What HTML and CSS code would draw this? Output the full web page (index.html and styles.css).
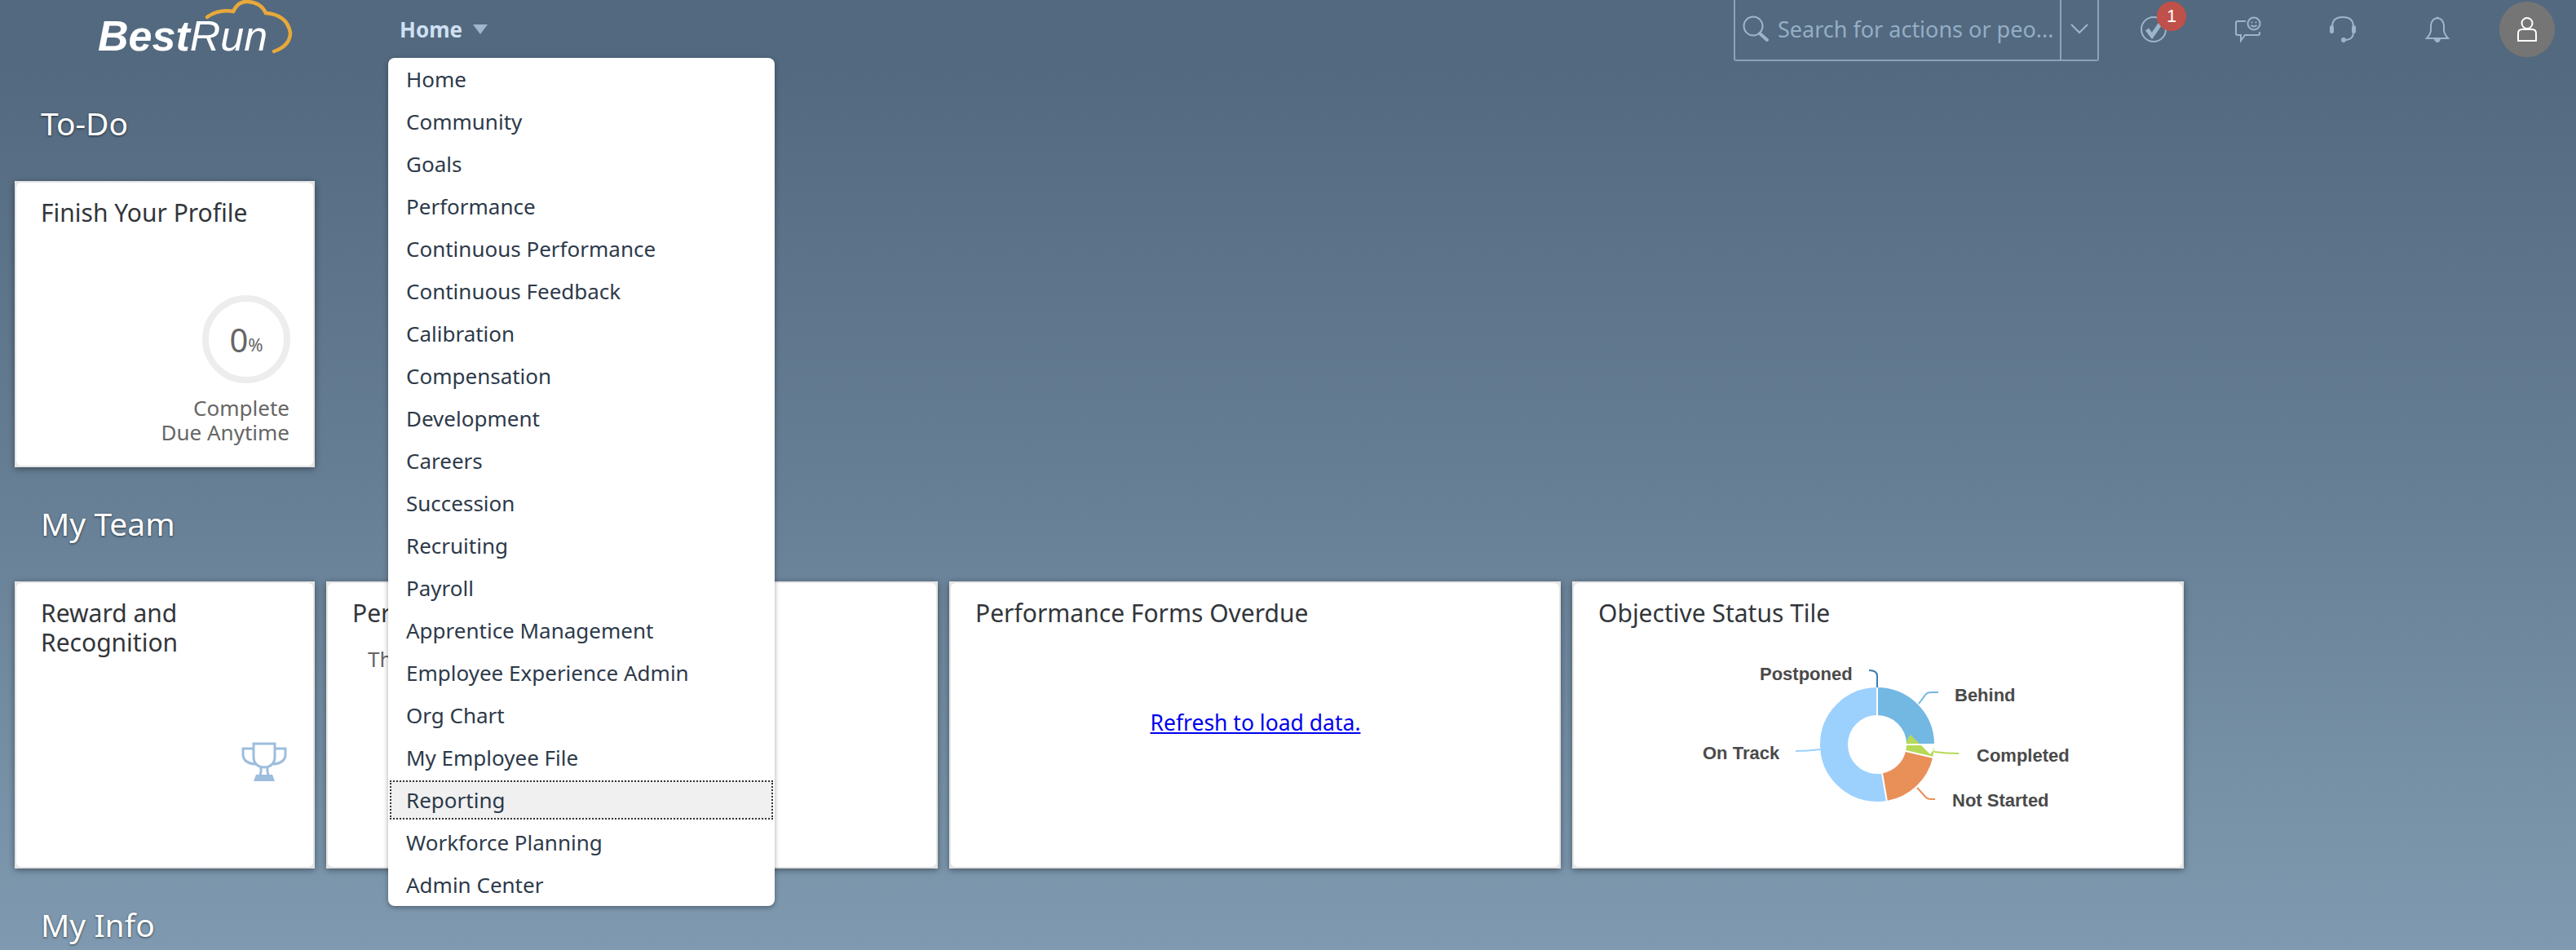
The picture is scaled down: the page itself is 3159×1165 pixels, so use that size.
FILE: index.html
```html
<!DOCTYPE html>
<html lang="en">
<head>
  <meta charset="UTF-8">
  <title>Home</title>
  <link rel="stylesheet" href="styles.css">
</head>
<body>
  <header class="header">
    <div class="logo">
      <svg class="logo-cloud" viewBox="0 0 150 70" width="150" height="70">
        <path d="M26 21 Q40 11 58 14 Q64 1 76 2 Q92 3 98 16 Q124 18 128 40 Q128 56 108 63" />
      </svg>
      <span class="logo-text"><b>Best</b>Run</span>
    </div>
    <nav class="nav">
      <span class="nav-home">Home</span>
      <span class="nav-arrow"></span>
      <ul class="menu">
        <li class="menu-item">Home</li>
        <li class="menu-item">Community</li>
        <li class="menu-item">Goals</li>
        <li class="menu-item">Performance</li>
        <li class="menu-item">Continuous Performance</li>
        <li class="menu-item">Continuous Feedback</li>
        <li class="menu-item">Calibration</li>
        <li class="menu-item">Compensation</li>
        <li class="menu-item">Development</li>
        <li class="menu-item">Careers</li>
        <li class="menu-item">Succession</li>
        <li class="menu-item">Recruiting</li>
        <li class="menu-item">Payroll</li>
        <li class="menu-item">Apprentice Management</li>
        <li class="menu-item">Employee Experience Admin</li>
        <li class="menu-item">Org Chart</li>
        <li class="menu-item">My Employee File</li>
        <li class="menu-item menu-item-focus">Reporting</li>
        <li class="menu-item">Workforce Planning</li>
        <li class="menu-item">Admin Center</li>
      </ul>
    </nav>
    <div class="search">
      <div class="search-field">
        <svg class="icon" viewBox="0 0 32 32" width="32" height="32">
          <circle cx="13" cy="13" r="11.5" />
          <path class="thick" d="M21 22 L30 30" />
        </svg>
        <span class="search-text">Search for actions or peo...</span>
      </div>
      <div class="search-toggle">
        <svg class="icon" viewBox="0 0 22 12" width="22" height="12"><path d="M1 1 L11 11 L21 1" /></svg>
      </div>
    </div>
    <div class="header-btn">
      <svg class="icon" viewBox="0 0 32 32" width="32" height="32">
        <circle cx="16" cy="16" r="15" />
        <path class="check" d="M8 16 L14 24 L25 8" />
      </svg>
      <span class="badge">1</span>
    </div>
    <div class="header-btn">
      <svg class="icon" viewBox="0 0 32 30" width="32" height="30">
        <path d="M13 5 H3 Q1 5 1 7 V20 Q1 22 3 22 H7 V29 L12 22 H28 Q30 22 30 20 V18" />
        <circle cx="23" cy="8" r="7.5" />
        <circle class="dot" cx="20.5" cy="6.5" r="1" />
        <circle class="dot" cx="25.5" cy="6.5" r="1" />
        <path d="M19.5 10 Q23 13 26.5 10" />
      </svg>
    </div>
    <div class="header-btn">
      <svg class="icon" viewBox="0 0 32 32" width="32" height="32">
        <path d="M3 15 V13 Q3 1 16 1 Q29 1 29 13 V20 Q29 28 20 29" />
        <rect class="dot" x="0" y="11" width="5" height="10" rx="2.5" />
        <rect class="dot" x="27" y="11" width="5" height="10" rx="2.5" />
        <circle class="dot" cx="17" cy="29" r="3" />
      </svg>
    </div>
    <div class="header-btn">
      <svg class="icon" viewBox="0 0 28 32" width="28" height="32">
        <path d="M14 2 Q21 3 22 11 V18 Q23 23 27 27 H1 Q5 23 6 18 V11 Q7 3 14 2 Z" />
        <circle class="dot" cx="14" cy="2" r="1.5" />
        <path class="dot" d="M10 28 H18 Q17 32 14 32 Q11 32 10 28 Z" />
      </svg>
    </div>
    <div class="avatar">
      <svg class="avatar-icon" viewBox="0 0 24 30" width="24" height="30">
        <circle cx="12" cy="7.5" r="6.5" />
        <path d="M1 29 V20 Q1 15 6 15 H18 Q23 15 23 20 V29 Z" />
      </svg>
    </div>
  </header>

  <main class="main">
    <h2 class="section-title">To-Do</h2>
    <section class="tiles tiles-first">
      <div class="tile">
        <div class="tile-body">
          <h3 class="tile-title">Finish Your Profile</h3>
          <div class="profile">
            <div class="ring"><span class="ring-num">0</span><span class="ring-pct">%</span></div>
            <div class="profile-text">Complete<br>Due Anytime</div>
          </div>
        </div>
      </div>
    </section>

    <h2 class="section-title">My Team</h2>
    <section class="tiles">
      <div class="tile">
        <div class="tile-body">
          <h3 class="tile-title">Reward and Recognition</h3>
          <svg class="trophy" viewBox="0 0 56 50" width="56" height="50">
            <path d="M15 2 H41 V18 Q41 30 28 31 Q15 30 15 18 Z" />
            <path d="M15 8 H2 V16 Q3 26 17 27" />
            <path d="M41 8 H54 V16 Q53 26 39 27" />
            <path d="M24 31 Q25 39 20 46 M32 31 Q31 39 36 46" />
            <path class="trophy-base" d="M18 40 H38 L41 48 H15 Z" />
          </svg>
        </div>
      </div>
      <div class="tile tile-wide">
        <div class="tile-body">
          <h3 class="tile-title">Per</h3>
          <p class="tile-note">Th</p>
        </div>
      </div>
      <div class="tile tile-wide">
        <div class="tile-body">
          <h3 class="tile-title">Performance Forms Overdue</h3>
          <a class="refresh" href="#">Refresh to load data.</a>
        </div>
      </div>
      <div class="tile tile-wide">
        <div class="tile-body">
          <h3 class="tile-title">Objective Status Tile</h3>
          <svg class="chart" viewBox="-374 -113 748 240" width="748" height="240">
            <!-- slices, angles out of 360 starting at 12 o'clock -->
            <circle class="slice" r="53" pathLength="360" stroke="#9cd1fe" stroke-dasharray="0 170 190 0" transform="rotate(-90)" />
            <circle class="slice" r="53" pathLength="360" stroke="#73b8e2" stroke-dasharray="90 270" transform="rotate(-90)" />
            <circle class="slice" r="53" pathLength="360" stroke="#b6d957" stroke-dasharray="0 90 13 257" transform="rotate(-90)" />
            <circle class="slice" r="53" pathLength="360" stroke="#e98f58" stroke-dasharray="0 103 67 190" transform="rotate(-90)" />
            <g class="seps">
              <path d="M0 -36 V-71" />
              <path d="M36 0 H71" />
              <path d="M35 8 L69 16" />
              <path d="M6 35 L12 70" />
            </g>
            <path class="lead" stroke="#3b7db0" d="M0 -70 V-84 Q0 -91 -10 -91" />
            <path class="lead" stroke="#73b8e2" d="M51 -50 L60 -62 Q62 -64 66 -64 H75" />
            <path class="lead" stroke="#b6d957" d="M70 9 Q85 11 100 11" />
            <path class="lead" stroke="#e98f58" d="M49 53 L60 65 Q62 67 66 67 H71" />
            <path class="lead" stroke="#9cd1fe" d="M-70 6 Q-85 8 -100 8" />
            <text class="chart-label" x="-144" y="-79">Postponed</text>
            <text class="chart-label" x="95" y="-53">Behind</text>
            <text class="chart-label" x="122" y="21">Completed</text>
            <text class="chart-label" x="92" y="76">Not Started</text>
            <text class="chart-label" x="-214" y="18">On Track</text>
          </svg>
        </div>
      </div>
    </section>

    <h2 class="section-title">My Info</h2>
  </main>
</body>
</html>
```

FILE: styles.css
```css
html, body {
  height: 100%;
  margin: 0;
  padding: 0;
  overflow: hidden;
}
body {
  background: linear-gradient(to bottom, #53697f 0, #53697f 82px, #667e94 50%, #7f9ab0 100%);
  font-family: "Noto Sans", sans-serif;
  color: #32363a;
}

/* Header */
.header {
  height: 82px;
  box-sizing: border-box;
  padding: 0 26px 10px 120px;
  display: flex;
  align-items: center;
}
.logo {
  position: relative;
  width: 370px;
  height: 72px;
}
.logo-cloud {
  position: absolute;
  left: 108px;
  top: 0;
  fill: none;
  stroke: #e8a93a;
  stroke-width: 4.5;
  stroke-linecap: round;
}
.logo-text {
  position: absolute;
  left: 0;
  top: 16px;
  font-family: "Liberation Sans", sans-serif;
  font-size: 52px;
  line-height: 56px;
  font-style: italic;
  color: #fff;
}
.nav {
  position: relative;
  display: flex;
  align-items: center;
  gap: 13px;
}
.nav-home {
  font-size: 26px;
  font-weight: 700;
  color: #cfe0f2;
}
.nav-arrow {
  width: 0;
  height: 0;
  border-left: 9px solid transparent;
  border-right: 9px solid transparent;
  border-top: 12px solid #9fb6cc;
}
.menu {
  position: absolute;
  left: -14px;
  top: 53px;
  z-index: 5;
  width: 474px;
  margin: 0;
  padding: 0;
  list-style: none;
  background: #fff;
  border-radius: 8px;
  box-shadow: 0 2px 6px rgba(0, 0, 0, .35);
}
.menu-item {
  height: 52px;
  box-sizing: border-box;
  padding-left: 20px;
  border: 2px solid transparent;
  background-clip: padding-box;
  display: flex;
  align-items: center;
  font-size: 26px;
  color: #2d3a4a;
}
.menu-item-focus {
  background-color: #f0f0f0;
  outline: 2px dotted #333;
  outline-offset: -4px;
}

/* Search */
.search {
  align-self: flex-start;
  margin-left: auto;
  width: 448px;
  height: 75px;
  box-sizing: border-box;
  border: 2px solid #8ba3ba;
  border-top: 0;
  border-radius: 0 0 3px 3px;
  display: flex;
}
.search-field {
  width: 400px;
  box-sizing: border-box;
  padding: 0 0 3px 9px;
  border-right: 2px solid #8ba3ba;
  display: flex;
  align-items: center;
  gap: 11px;
}
.search-text {
  font-size: 27px;
  white-space: nowrap;
  color: #93aec6;
}
.search-toggle {
  flex: 1;
  display: flex;
  align-items: center;
  justify-content: center;
  padding-bottom: 4px;
}
.icon {
  display: block;
  flex: none;
  fill: none;
  stroke: #9db5cc;
  stroke-width: 2;
  overflow: visible;
}
.icon .thick { stroke-width: 4; stroke-linecap: round; }
.icon .check { stroke-width: 5; }
.icon .dot { fill: #9db5cc; stroke: none; }

.header-btn {
  position: relative;
  width: 116px;
  display: flex;
  justify-content: center;
}
.search + .header-btn { margin-left: 9px; }
.badge {
  position: absolute;
  left: 62px;
  top: -18px;
  width: 36px;
  height: 36px;
  border-radius: 50%;
  background: #c0504a;
  color: #fff;
  font: 22px/36px "Liberation Sans", sans-serif;
  text-align: center;
}
.avatar {
  width: 68px;
  height: 68px;
  margin-left: 18px;
  border-radius: 50%;
  background: #757575;
  display: flex;
  align-items: center;
  justify-content: center;
}
.avatar-icon {
  fill: none;
  stroke: #fff;
  stroke-width: 2;
}

/* Sections */
.main {
  padding-left: 18px;
}
.section-title {
  height: 140px;
  box-sizing: border-box;
  margin: 0;
  padding: 0 0 3px 32px;
  display: flex;
  align-items: center;
  font-size: 39px;
  font-weight: 400;
  color: #fff;
  text-shadow: 0 1px 3px rgba(0, 0, 0, .6);
}
.tiles {
  display: grid;
  grid-template-columns: repeat(7, 368px);
  grid-auto-rows: 352px;
  column-gap: 14px;
}
.tiles-first { grid-auto-rows: 351px; }
.tile {
  box-sizing: border-box;
  padding: 2px;
  background: #e6e6e6;
  box-shadow: 0 2px 8px rgba(0, 0, 0, .4);
}
.tile-wide { grid-column: span 2; }
.tile-body {
  position: relative;
  height: 100%;
  box-sizing: border-box;
  padding: 19px 29px 0 30px;
  border-radius: 6px;
  background: #fff;
  display: flex;
  flex-direction: column;
}
.tile-title {
  margin: 0;
  font-size: 30px;
  line-height: 36px;
  font-weight: 400;
  color: #32363a;
}
.tile-note {
  margin: 20px 0 0 19px;
  font-size: 26px;
  color: #666;
}
.profile {
  margin-top: auto;
  padding-bottom: 26px;
  display: flex;
  flex-direction: column;
  align-items: flex-end;
}
.ring {
  width: 108px;
  height: 108px;
  box-sizing: border-box;
  margin-right: -1px;
  border: 8px solid #ededed;
  border-radius: 50%;
  display: flex;
  align-items: center;
  justify-content: center;
  color: #666;
}
.ring-num { font-size: 40px; }
.ring-pct { font-size: 22px; margin-top: 12px; }
.profile-text {
  margin-top: 15px;
  font-size: 26px;
  line-height: 30px;
  text-align: right;
  color: #666;
}
.trophy {
  position: absolute;
  right: 32px;
  top: 195px;
  fill: none;
  stroke: #9dbddd;
  stroke-width: 3;
}
.trophy-base { fill: #9dbddd; stroke: none; }
.refresh {
  margin-top: 98px;
  align-self: center;
  font-size: 26.5px;
  color: #0000ee;
}
.chart {
  display: block;
  margin: 30px 0 0 -32px;
}
.slice {
  fill: none;
  stroke-width: 34;
}
.seps {
  stroke: #fff;
  stroke-width: 2;
}
.lead {
  fill: none;
  stroke-width: 2;
}
.chart-label {
  font-family: "Liberation Sans", sans-serif;
  font-size: 22px;
  font-weight: 700;
  fill: #4a4a4a;
}
```
